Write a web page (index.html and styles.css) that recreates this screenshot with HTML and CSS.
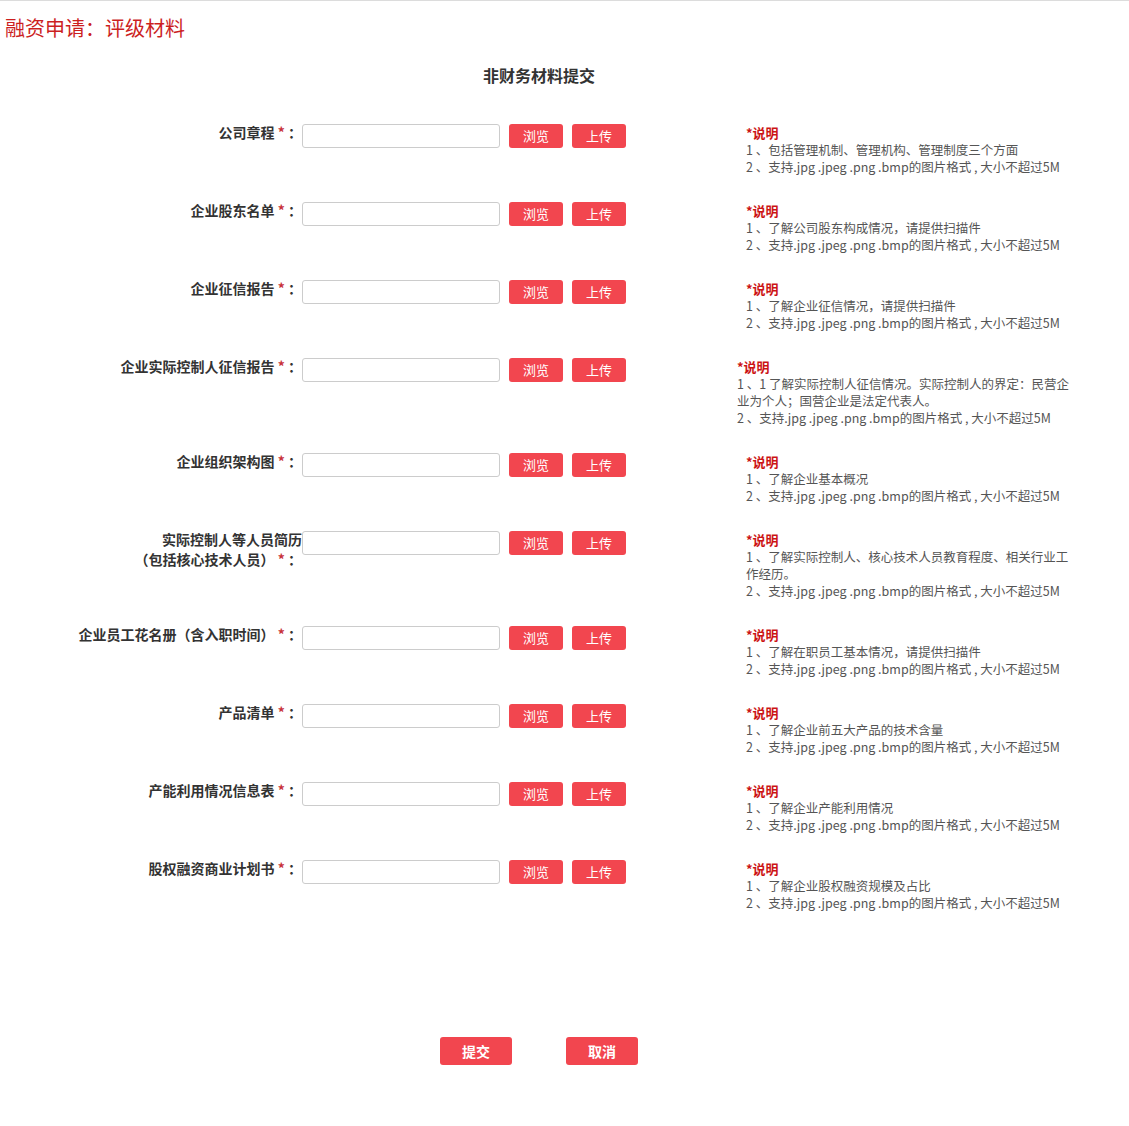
FILE: index.html
```html
<!DOCTYPE html>
<html lang="zh-CN">
<head>
<meta charset="utf-8">
<title>融资申请：评级材料</title>
<link rel="stylesheet" href="styles.css">
</head>
<body>
<header class="page-header">融资申请：评级材料</header>
<main class="content">
  <h2 class="section-title">非财务材料提交</h2>
  <div class="form-list">
    <div class="form-row">
      <label class="field-label">公司章程 <span class="req">*</span> ：</label>
      <input class="file-input" type="text">
      <button class="btn">浏览</button>
      <button class="btn">上传</button>
      <div class="note">
        <div class="note-title">*说明</div>
        <div>1 、包括管理机制、管理机构、管理制度三个方面</div>
        <div>2 、支持.jpg .jpeg .png .bmp的图片格式 , 大小不超过5M</div>
      </div>
    </div>
    <div class="form-row">
      <label class="field-label">企业股东名单 <span class="req">*</span> ：</label>
      <input class="file-input" type="text">
      <button class="btn">浏览</button>
      <button class="btn">上传</button>
      <div class="note">
        <div class="note-title">*说明</div>
        <div>1 、了解公司股东构成情况，请提供扫描件</div>
        <div>2 、支持.jpg .jpeg .png .bmp的图片格式 , 大小不超过5M</div>
      </div>
    </div>
    <div class="form-row">
      <label class="field-label">企业征信报告 <span class="req">*</span> ：</label>
      <input class="file-input" type="text">
      <button class="btn">浏览</button>
      <button class="btn">上传</button>
      <div class="note">
        <div class="note-title">*说明</div>
        <div>1 、了解企业征信情况，请提供扫描件</div>
        <div>2 、支持.jpg .jpeg .png .bmp的图片格式 , 大小不超过5M</div>
      </div>
    </div>
    <div class="form-row">
      <label class="field-label">企业实际控制人征信报告 <span class="req">*</span> ：</label>
      <input class="file-input" type="text">
      <button class="btn">浏览</button>
      <button class="btn">上传</button>
      <div class="note note-wide">
        <div class="note-title">*说明</div>
        <div>1 、1 了解实际控制人征信情况。实际控制人的界定：民营企<br>业为个人；国营企业是法定代表人。</div>
        <div>2 、支持.jpg .jpeg .png .bmp的图片格式 , 大小不超过5M</div>
      </div>
    </div>
    <div class="form-row">
      <label class="field-label">企业组织架构图 <span class="req">*</span> ：</label>
      <input class="file-input" type="text">
      <button class="btn">浏览</button>
      <button class="btn">上传</button>
      <div class="note">
        <div class="note-title">*说明</div>
        <div>1 、了解企业基本概况</div>
        <div>2 、支持.jpg .jpeg .png .bmp的图片格式 , 大小不超过5M</div>
      </div>
    </div>
    <div class="form-row">
      <label class="field-label">实际控制人等人员简历<br>（包括核心技术人员） <span class="req">*</span> ：</label>
      <input class="file-input" type="text">
      <button class="btn">浏览</button>
      <button class="btn">上传</button>
      <div class="note">
        <div class="note-title">*说明</div>
        <div>1 、了解实际控制人、核心技术人员教育程度、相关行业工<br>作经历。</div>
        <div>2 、支持.jpg .jpeg .png .bmp的图片格式 , 大小不超过5M</div>
      </div>
    </div>
    <div class="form-row">
      <label class="field-label">企业员工花名册（含入职时间） <span class="req">*</span> ：</label>
      <input class="file-input" type="text">
      <button class="btn">浏览</button>
      <button class="btn">上传</button>
      <div class="note">
        <div class="note-title">*说明</div>
        <div>1 、了解在职员工基本情况，请提供扫描件</div>
        <div>2 、支持.jpg .jpeg .png .bmp的图片格式 , 大小不超过5M</div>
      </div>
    </div>
    <div class="form-row">
      <label class="field-label">产品清单 <span class="req">*</span> ：</label>
      <input class="file-input" type="text">
      <button class="btn">浏览</button>
      <button class="btn">上传</button>
      <div class="note">
        <div class="note-title">*说明</div>
        <div>1 、了解企业前五大产品的技术含量</div>
        <div>2 、支持.jpg .jpeg .png .bmp的图片格式 , 大小不超过5M</div>
      </div>
    </div>
    <div class="form-row">
      <label class="field-label">产能利用情况信息表 <span class="req">*</span> ：</label>
      <input class="file-input" type="text">
      <button class="btn">浏览</button>
      <button class="btn">上传</button>
      <div class="note">
        <div class="note-title">*说明</div>
        <div>1 、了解企业产能利用情况</div>
        <div>2 、支持.jpg .jpeg .png .bmp的图片格式 , 大小不超过5M</div>
      </div>
    </div>
    <div class="form-row">
      <label class="field-label">股权融资商业计划书 <span class="req">*</span> ：</label>
      <input class="file-input" type="text">
      <button class="btn">浏览</button>
      <button class="btn">上传</button>
      <div class="note">
        <div class="note-title">*说明</div>
        <div>1 、了解企业股权融资规模及占比</div>
        <div>2 、支持.jpg .jpeg .png .bmp的图片格式 , 大小不超过5M</div>
      </div>
    </div>
  </div>
  <div class="actions">
    <button class="btn btn-lg">提交</button>
    <button class="btn btn-lg">取消</button>
  </div>
</main>
</body>
</html>
```

FILE: styles.css
```css
html, body {
  margin: 0;
  padding: 0;
  background: #fff;
}
body {
  border-top: 1px solid #dcdcdc;
  font-family: "Microsoft YaHei", "Noto Sans CJK SC", sans-serif;
  color: #333;
  text-spacing-trim: space-all;
}
.page-header {
  padding: 13px 0 0 5px;
  font-size: 20px;
  line-height: 28px;
  color: #cc1f1f;
}
.content {
  width: 1078px;
}
.section-title {
  margin: 21px 0 0;
  text-align: center;
  font-size: 16px;
  line-height: 24px;
  font-weight: bold;
  color: #333;
}
.form-list {
  margin-top: 37px;
  display: flex;
  flex-direction: column;
  gap: 27px;
}
.form-row {
  display: flex;
  align-items: flex-start;
}
.field-label {
  flex: 0 0 302px;
  margin-top: -2px;
  text-align: right;
  font-size: 14px;
  line-height: 20px;
  font-weight: bold;
  color: #333;
  white-space: nowrap;
}
.req {
  color: #c8323a;
}
.file-input {
  box-sizing: border-box;
  width: 198px;
  height: 24px;
  margin: 0;
  padding: 0 4px;
  border: 1px solid #ccc;
  border-radius: 3px;
  background: #fff;
  font-size: 12px;
}
.btn {
  box-sizing: border-box;
  width: 54px;
  height: 24px;
  margin: 0 0 0 9px;
  padding: 0;
  border: none;
  border-radius: 3px;
  background: #f2464f;
  color: #fff;
  font-family: inherit;
  font-size: 13px;
  line-height: 24px;
  cursor: pointer;
}
.note {
  margin-left: 120px;
  font-size: 12.5px;
  line-height: 17px;
  color: #555;
  white-space: nowrap;
}
.note-wide {
  margin-left: 111px;
}
.note-title {
  color: #cc1414;
  font-weight: bold;
  font-size: 13px;
}
.actions {
  margin-top: 126px;
  display: flex;
  justify-content: center;
  gap: 54px;
}
.btn-lg {
  width: 72px;
  height: 28px;
  margin: 0;
  font-size: 14px;
  font-weight: bold;
  line-height: 28px;
}
```
